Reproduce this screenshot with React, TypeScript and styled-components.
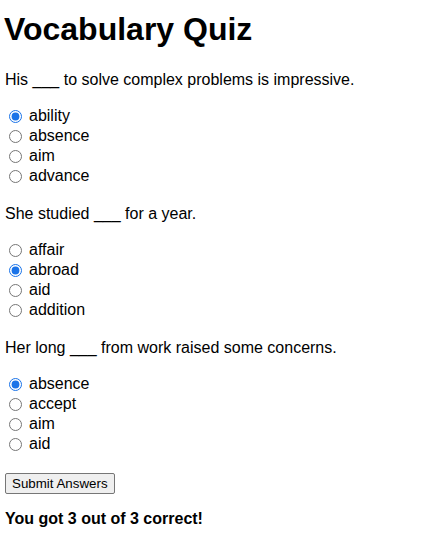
import React, { useState } from "react";
import styled, { createGlobalStyle } from "styled-components";

const Global = createGlobalStyle`
  body {
    margin: 0;
    background: #ffffff;
    font-family: "Liberation Sans", Arial, sans-serif;
    color: #000000;
  }
`;

const Page = styled.div`
  padding: 11px 5px 8px;
`;

const Title = styled.h1`
  font-size: 32px;
  font-weight: bold;
  margin: 0 0 23px -1px;
  line-height: 37px;
`;

const Question = styled.div`
  margin-bottom: 19px;
`;

const Prompt = styled.p`
  font-size: 16px;
  margin: 0 0 17px;
  line-height: 18px;
`;

const Options = styled.div`
  display: flex;
  flex-direction: column;
`;

const Option = styled.label`
  display: flex;
  align-items: center;
  height: 20px;
  font-size: 16px;
  line-height: 18px;
`;

const Radio = styled.input`
  width: 13px;
  height: 13px;
  margin: 1px 7px 0 4px;
  accent-color: #1a73e8;
`;

const SubmitButton = styled.button`
  font-family: "Liberation Sans", Arial, sans-serif;
  font-size: 13.33px;
  padding: 1px 6px;
  height: 21px;
  margin: 0;
  border: 1px solid #767676;
  border-radius: 2px;
  background: #efefef;
  color: #000;
`;

const Result = styled.p`
  font-size: 16px;
  font-weight: bold;
  margin: 16px 0 0;
  line-height: 18px;
`;

const questions = [
  {
    text: "His ___ to solve complex problems is impressive.",
    options: ["ability", "absence", "aim", "advance"],
    selected: "ability",
  },
  {
    text: "She studied ___ for a year.",
    options: ["affair", "abroad", "aid", "addition"],
    selected: "abroad",
  },
  {
    text: "Her long ___ from work raised some concerns.",
    options: ["absence", "accept", "aim", "aid"],
    selected: "absence",
  },
];

export default function App() {
  const [answers, setAnswers] = useState<string[]>(questions.map((q) => q.selected));
  return (
    <Page>
      <Global />
      <Title>Vocabulary Quiz</Title>
      {questions.map((q, qi) => (
        <Question key={qi}>
          <Prompt>{q.text}</Prompt>
          <Options>
            {q.options.map((o) => (
              <Option key={o}>
                <Radio
                  type="radio"
                  name={`q${qi}`}
                  checked={answers[qi] === o}
                  onChange={() => {
                    const next = [...answers];
                    next[qi] = o;
                    setAnswers(next);
                  }}
                />
                {o}
              </Option>
            ))}
          </Options>
        </Question>
      ))}
      <SubmitButton>Submit Answers</SubmitButton>
      <Result>You got 3 out of 3 correct!</Result>
    </Page>
  );
}
